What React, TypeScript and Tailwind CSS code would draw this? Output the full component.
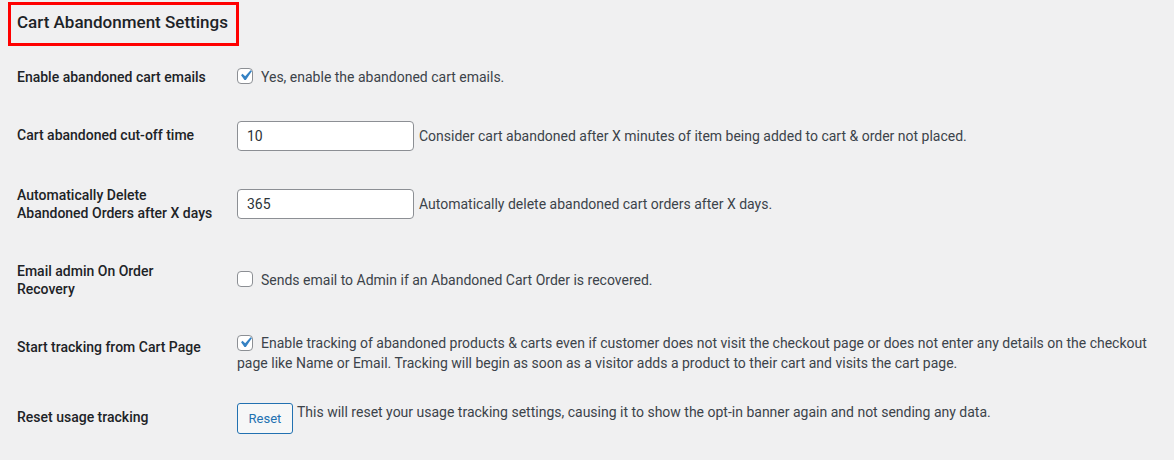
import React from "react";

function Checkbox({ checked }: { checked?: boolean }) {
  return (
    <span className="relative inline-block w-[16px] h-[16px] shrink-0 rounded-[4px] border border-[#8c8f94] bg-white align-middle mr-[8px] -mt-[3px]">
      {checked && (
        <svg viewBox="0 0 20 20" className="absolute -left-[3px] -top-[4px] w-[21px] h-[21px]" fill="#3582c4">
          <path d="M14.83 4.89l1.34.94-5.81 8.38H9.02L5.78 9.67l1.34-1.25 2.57 2.4z" />
        </svg>
      )}
    </span>
  );
}

function Row({ label, children }: { label: React.ReactNode; children: React.ReactNode }) {
  return (
    <div className="flex">
      <div className="w-[220px] shrink-0 pt-[20px] pb-[20px] pr-[20px] font-medium text-[#1d2327] leading-[18px]">
        {label}
      </div>
      <div className="flex-1 py-[15px] flex items-center">{children}</div>
    </div>
  );
}

function TextInput({ value }: { value: string }) {
  return (
    <div className="w-[177px] h-[30px] shrink-0 rounded-[4px] border border-[#8c8f94] bg-white px-[9px] flex items-center text-[#2c3338]">
      {value}
    </div>
  );
}

export default function App() {
  return (
    <div className="min-h-screen bg-[#f0f0f1] font-['Roboto',sans-serif] text-[14px] text-[#3c434a] pl-[17px] pr-[17px]">
      <div className="-ml-[9px] pt-[2px]">
        <div className="w-[231px] h-[44px] border-[3px] border-[#ff0000] pl-[6px] pt-[6px]">
          <h2 className="text-[17px] leading-[22px] font-medium text-[#1d2327]">Cart Abandonment Settings</h2>
        </div>
      </div>
      <div className="mt-[2px]">
        <Row label="Enable abandoned cart emails">
          <div className="flex items-center leading-[20px]">
            <Checkbox checked />
            <span>Yes, enable the abandoned cart emails.</span>
          </div>
        </Row>
        <Row label="Cart abandoned cut-off time">
          <TextInput value="10" />
          <span className="ml-[5px]">Consider cart abandoned after X minutes of item being added to cart &amp; order not placed.</span>
        </Row>
        <Row
          label={
            <>
              Automatically Delete
              <br />
              Abandoned Orders after X days
            </>
          }
        >
          <TextInput value="365" />
          <span className="ml-[5px]">Automatically delete abandoned cart orders after X days.</span>
        </Row>
        <Row
          label={
            <>
              Email admin On Order
              <br />
              Recovery
            </>
          }
        >
          <div className="flex items-center leading-[20px]">
            <Checkbox />
            <span>Sends email to Admin if an Abandoned Cart Order is recovered.</span>
          </div>
        </Row>
        <Row label="Start tracking from Cart Page">
          <div className="leading-[20px]">
            <Checkbox checked />
            Enable tracking of abandoned products &amp; carts even if customer does not visit the checkout page or does not enter any details on the checkout
            <br />
            page like Name or Email. Tracking will begin as soon as a visitor adds a product to their cart and visits the cart page.
          </div>
        </Row>
        <Row label="Reset usage tracking">
          <div className="flex items-start">
            <button className="w-[56px] h-[31px] rounded-[3px] border border-[#2271b1] bg-[#f6f7f7] text-[13px] text-[#2271b1] leading-[29px]">
              Reset
            </button>
            <span className="ml-[4px] leading-[18px]">
              This will reset your usage tracking settings, causing it to show the opt-in banner again and not sending any data.
            </span>
          </div>
        </Row>
      </div>
    </div>
  );
}
